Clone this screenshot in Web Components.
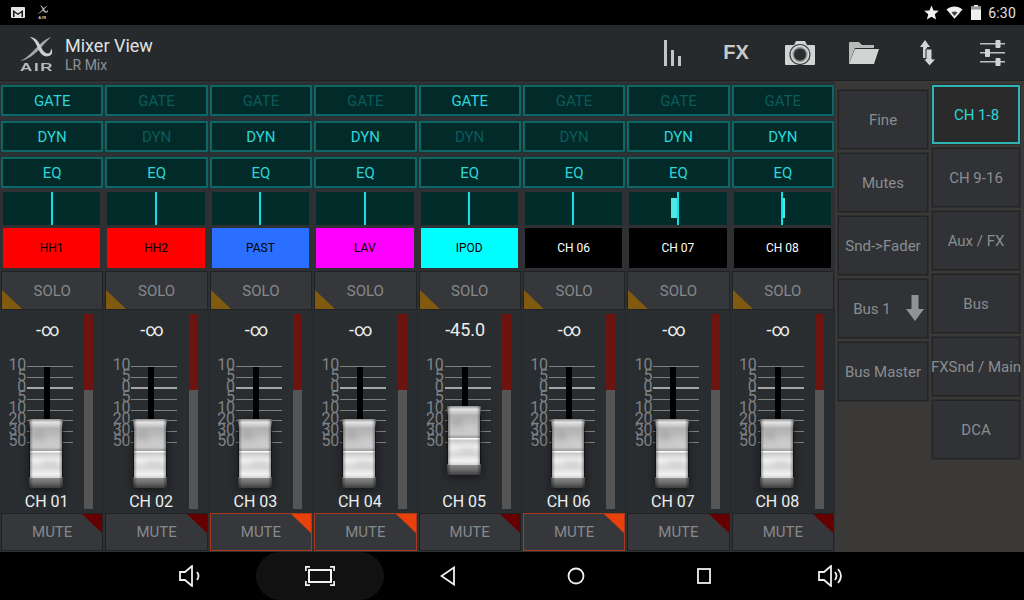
<!DOCTYPE html>
<html>
<head>
<meta charset="utf-8">
<title>Mixer View</title>
<style>
html,body{margin:0;padding:0;width:1024px;height:600px;overflow:hidden;background:#000;font-family:Roboto,"Liberation Sans",sans-serif}
</style>
</head>
<body>
<mixer-app></mixer-app>
<script>
const XLOGO = `<path d="M1 26C8 23 15 15 21 9 24 6 28 3 33 1 29 5 26 8 23 12 16 19 9 25 1 26Z" fill="#a4a6a7"/>
<path d="M11 1C16 1 20 5 22 10 24 14 26 18 30 18 32 18 33 16 33 13 35 16 35 20 30 21 25 22 22 18 20 14 18 9 16 4 11 1Z" fill="#cdcecf"/>`;

customElements.define('status-bar', class extends HTMLElement {
    constructor() {
        super();
        this.attachShadow({ mode: 'open' }).innerHTML = `<style>
:host{display:flex;align-items:center;height:25px;background:#000;color:#e0e0e0;padding:0 8px 0 11px;box-sizing:border-box}
svg{display:block}
.air{margin-left:11px;display:flex;flex-direction:column;align-items:center;width:13px}
.air span{font:bold 4px "Liberation Sans",sans-serif;letter-spacing:.6px;line-height:4px;color:#ccc}
.sp{flex:1}
.time{font-size:14px;margin-left:7px;font-weight:400;letter-spacing:.2px}
</style>
<svg width="14" height="11" viewBox="0 0 14 11"><rect width="14" height="11" rx="1" fill="#e4e4e4"/><path d="M2 10V3L7 6.5 12 3V10H10.500V5.500L7 8 3.500 5.500V10Z" fill="#111"/></svg>
<div class="air"><svg width="13" height="11" viewBox="0 0 37 30">${XLOGO}</svg><span>AIR</span></div>
<div class="sp"></div>
<svg width="15" height="15" viewBox="0 0 15 15"><path d="M7.500 .5 9.600 5.400 14.800 5.800 10.800 9.300 12.100 14.500 7.500 11.700 2.900 14.500 4.200 9.300 .2 5.800 5.400 5.400Z" fill="#f0f0f0"/></svg>
<svg width="17" height="13" viewBox="0 0 17 13" style="margin-left:7px"><path d="M.5 3.500C5 -.5 12 -.5 16.500 3.500L8.500 12.800Z" fill="#f0f0f0"/><path d="M5.500 6.500C7 5.300 10 5.300 11.500 6.500L8.500 10Z" fill="#444"/></svg>
<svg width="10" height="15" viewBox="0 0 10 15" style="margin-left:8px"><path d="M3 0H7V1.500H10V15H0V1.500H3Z" fill="#f0f0f0"/><rect y="1.500" width="10" height="3" fill="#9a9a9a"/></svg>
<span class="time">6:30</span>`;
    }
});

customElements.define('action-button', class extends HTMLElement {
    constructor() {
        super();
        this.attachShadow({ mode: 'open' }).innerHTML = `<style>
:host{display:flex;align-items:center;justify-content:center;width:64px;height:100%;color:#d2d4d4}
</style><slot></slot>`;
    }
});

customElements.define('action-bar', class extends HTMLElement {
    constructor() {
        super();
        this.attachShadow({ mode: 'open' }).innerHTML = `<style>
:host{display:flex;align-items:center;height:56px;background:#272a2d;box-sizing:border-box;border-bottom:1px solid #1f2123}
.logo{width:36px;margin-left:19px;display:flex;flex-direction:column;align-items:center;margin-top:3px}
.logo span{font:bold 10px/9px "Liberation Sans",sans-serif;letter-spacing:1px;color:#b9babb;transform:scaleX(1.7);margin-top:-1px}
.titles{margin-left:10px;display:flex;flex-direction:column;margin-top:3px}
.t{font-size:18px;line-height:21px;color:#dfe1e1}
.s{font-size:14px;line-height:18px;color:#8f9294}
.sp{flex:1}
.fx{font:bold 20px "Liberation Sans",sans-serif;color:#c8caca}
svg{display:block}
</style>
<div class="logo"><svg width="36" height="28" viewBox="0 0 37 29">${XLOGO}</svg><span>AIR</span></div>
<div class="titles"><div class="t">Mixer View</div><div class="s">LR Mix</div></div>
<div class="sp"></div>
<action-button><svg width="20" height="26" viewBox="0 0 20 26"><rect x="2" y="0" width="3" height="26" fill="#c4c6c6"/><rect x="9" y="10" width="3" height="16" fill="#c4c6c6"/><rect x="16" y="16" width="3" height="10" fill="#c4c6c6"/></svg></action-button>
<action-button><span class="fx">FX</span></action-button>
<action-button><svg width="30" height="25" viewBox="0 0 30 25"><path d="M1 5H9L11 1H20L22 5H29Q30 5 30 6V24Q30 25 29 25H1Q0 25 0 24V6Q0 5 1 5Z" fill="#d2d4d4"/><circle cx="15" cy="14.500" r="10" fill="none" stroke="#3a3c3e" stroke-width="1.200"/><circle cx="15" cy="14.500" r="7.500" fill="#8c8e90"/><circle cx="15" cy="14.500" r="6" fill="#2b2d30"/></svg></action-button>
<action-button><svg width="30" height="22" viewBox="0 0 30 22"><path d="M0 22V1Q0 0 1 0H10L13 3H25V6H6Z" fill="#b8baba"/><path d="M6 7H30L25 22H0Z" fill="#d2d4d4"/></svg></action-button>
<action-button><svg width="16" height="26" viewBox="0 0 16 26"><path d="M5 0 10 7H7V18H3V7H0Z" fill="#d2d4d4"/><path d="M6 9H12V19H16L9.500 26 3.500 19H6Z" fill="#d2d4d4" stroke="#272a2d" stroke-width="1"/></svg></action-button>
<action-button><svg width="25" height="26" viewBox="0 0 25 26"><g fill="#bfc1c1"><rect y="3" width="25" height="1.500"/><rect y="12" width="25" height="1.500"/><rect y="21" width="25" height="1.500"/></g><g fill="#d2d4d4"><rect x="15.500" y="0" width="5" height="8" rx="1"/><rect x="5" y="9" width="5" height="8" rx="1"/><rect x="15.500" y="18" width="5" height="8" rx="1"/></g></svg></action-button>`;
    }
});

customElements.define('fx-toggle', class extends HTMLElement {
    constructor() {
        super();
        this.attachShadow({ mode: 'open' }).innerHTML = `<style>
:host{display:flex;align-items:center;justify-content:center;height:31px;box-sizing:border-box;background:#022a28;border:2px solid #0f6666;box-shadow:0 0 0 1px #233;font-size:15px;color:#0c5a5c;margin:0 1px 0 1px}
:host([on]){color:#2bd6da}
</style><slot></slot>`;
    }
});

customElements.define('pan-display', class extends HTMLElement {
    constructor() {
        super();
        // negative width: block left of the centre line, positive: right of it
        const w = +this.getAttribute('width') || 0;
        const left = w < 0 ? 47.5 + w : 49.5;
        this.attachShadow({ mode: 'open' }).innerHTML = `<style>
:host{display:block;position:relative;height:33px;background:#022c2a;margin:0 4px 0 3px}
.c{position:absolute;left:47.500px;top:0;bottom:0;width:2px;background:#14e0e4}
.b{position:absolute;left:${left}px;top:6px;bottom:7px;background:#4fe6e6}
</style><div class="c"></div><div class="b" style="width:${Math.abs(w)}px"></div>`;
    }
});

customElements.define('corner-button', class extends HTMLElement {
    constructor() {
        super();
        this.attachShadow({ mode: 'open' }).innerHTML = `<style>
:host{display:flex;position:relative;align-items:center;justify-content:center;box-sizing:border-box;background:#35373b;border:1px solid #202224;color:#86898b;font-size:15px;overflow:hidden}
:host([active]){border-color:#a83a1c}
.tri{position:absolute;width:0;height:0}
:host([kind=solo]) .tri{left:0;bottom:0;border-left:20px solid #7f5a0f;border-top:19px solid transparent}
:host([kind=mute]) .tri{right:0;top:0;border-right:20px solid #660000;border-bottom:19px solid transparent}
:host([active]) .tri{border-right-color:#e8420a}
</style><div class="tri"></div><slot></slot>`;
    }
});

customElements.define('fader-cap', class extends HTMLElement {
    constructor() {
        super();
        const id = 'g' + Math.random().toString(36).slice(2);
        this.attachShadow({ mode: 'open' }).innerHTML = `<style>
:host{display:block;position:absolute;width:36px;height:71px;filter:drop-shadow(0 2px 5px rgba(0,0,0,.55))}
svg{display:block}
</style>
<svg width="36" height="71" viewBox="0 0 36 71">
<defs>
<linearGradient id="${id}a" x1="0" y1="0" x2="0" y2="1"><stop offset="0" stop-color="#8c8c8c"/><stop offset=".1" stop-color="#e4e4e4"/><stop offset=".3" stop-color="#b2b2b2"/><stop offset=".6" stop-color="#c0c0c0"/><stop offset=".88" stop-color="#cacaca"/><stop offset="1" stop-color="#9a9a9a"/></linearGradient>
<linearGradient id="${id}b" x1="0" y1="0" x2="0" y2="1"><stop offset="0" stop-color="#c4c4c4"/><stop offset=".3" stop-color="#eeeeee"/><stop offset=".6" stop-color="#dadada"/><stop offset=".85" stop-color="#f2f2f2"/><stop offset="1" stop-color="#d4d4d4"/></linearGradient>
<linearGradient id="${id}c" x1="0" y1="0" x2="0" y2="1"><stop offset="0" stop-color="#8a8a8a"/><stop offset=".5" stop-color="#6a6a6a"/><stop offset="1" stop-color="#3e3e3e"/></linearGradient>
<linearGradient id="${id}s" x1="0" y1="0" x2="1" y2="0"><stop offset="0" stop-color="#000" stop-opacity=".45"/><stop offset=".12" stop-color="#000" stop-opacity="0"/><stop offset=".88" stop-color="#000" stop-opacity="0"/><stop offset="1" stop-color="#000" stop-opacity=".45"/></linearGradient>
<filter id="${id}f"><feGaussianBlur stdDeviation="2.500"/></filter>
</defs>
<path d="M1 1H35L34 12V33H2V12Z" fill="url(#${id}a)"/>
<path d="M2 34H34V59L35 60H1L2 59Z" fill="url(#${id}b)"/>
<g filter="url(#${id}f)" opacity=".35">
<ellipse cx="11" cy="17" rx="6" ry="4" fill="#8d8d8d"/>
<ellipse cx="25" cy="24" rx="6" ry="4" fill="#dcdcdc"/>
<ellipse cx="22" cy="46" rx="9" ry="3" fill="#b0b0b0"/>
</g>
<rect x="2" y="33" width="32" height="1.500" fill="#fdfdfd"/>
<path d="M1 60H35V70H1Z" fill="url(#${id}c)"/>
<rect x="1" y="1" width="34" height="69" fill="url(#${id}s)"/>
</svg>`;
    }
});

customElements.define('fader-scale', class extends HTMLElement {
    constructor() {
        super();
        const labels = ['10', '5', '0', '5', '10', '20', '30', '50'];
        const rows = labels.map((l, i) => `<div class="r${i == 2 ? ' z' : ''}"><span>${l}</span><i></i></div>`).join('');
        this.attachShadow({ mode: 'open' }).innerHTML = `<style>
:host{display:block;position:relative;height:135px}
.r{display:flex;align-items:center;height:10.800px}
span{width:27px;box-sizing:border-box;padding-right:1px;margin-bottom:3px;text-align:right;font-size:16px;line-height:10.800px;color:#7f8285;letter-spacing:-.2px}
i{display:block;width:46px;height:1px;background:#7e8082}
.z i{height:2px;background:#a4a6a8}
.slot{position:absolute;left:44px;top:5px;width:6px;height:62px;background:#000}
</style>
<div>${rows}</div><div class="slot"></div>
<fader-cap style="top:${this.getAttribute('cap')}px;left:28px"></fader-cap>`;
    }
});

customElements.define('mixer-channel', class extends HTMLElement {
    constructor() {
        super();
        const a = n => this.getAttribute(n);
        const fg = a('fg') || '#000';
        this.attachShadow({ mode: 'open' }).innerHTML = `<style>
:host{display:flex;flex-direction:column;box-sizing:border-box;min-width:0;padding-top:4px;background:#2e3033}
.stack{display:flex;flex-direction:column;gap:5px}
pan-display{margin-top:4px}
.name{display:flex;align-items:center;justify-content:center;height:40px;margin:3px 4px 0 3px;font-size:12px}
corner-button[kind=solo]{height:39px;margin:3px 1px 0 1px}
.strip{display:flex;height:203px;background:#2a2d30;box-shadow:inset -1px 0 0 #25272a}
.left{flex:1;min-width:0;display:flex;flex-direction:column;position:relative}
.val{height:53px;padding:8px 0 0 11px;box-sizing:border-box;text-align:center;font-size:18px;color:#eceded;line-height:24px}
.meter{width:9px;margin:4px 11px 4px 0;background:linear-gradient(#6e1410 0,#6e1410 76px,#555 76px,#555 100%)}
.ch{flex:1;display:flex;align-items:flex-end;justify-content:center;font-size:16px;color:#eef0f0;line-height:20px;padding:0 0 1px 9px}
corner-button[kind=mute]{height:38px;margin:0 1px}
</style>
<div class="stack">
<fx-toggle ${a('gate') != null ? 'on' : ''}>GATE</fx-toggle>
<fx-toggle ${a('dyn') != null ? 'on' : ''}>DYN</fx-toggle>
<fx-toggle on>EQ</fx-toggle>
</div>
<pan-display width="${a('pan') || 0}"></pan-display>
<div class="name" style="background:${a('color')};color:${fg}">${a('label')}</div>
<corner-button kind="solo">SOLO</corner-button>
<div class="strip">
<div class="left">
<div class="val">${a('value') || '-∞'}</div>
<fader-scale cap="${a('cap') || 56}"></fader-scale>
<div class="ch">${a('ch')}</div>
</div>
<div class="meter"></div>
</div>
<corner-button kind="mute" ${a('muted') != null ? 'active' : ''}>MUTE</corner-button>`;
    }
});

customElements.define('side-button', class extends HTMLElement {
    constructor() {
        super();
        this.attachShadow({ mode: 'open' }).innerHTML = `<style>
:host{display:flex;align-items:center;justify-content:center;position:relative;box-sizing:border-box;height:59px;background:#303236;border:1px solid #232426;box-shadow:0 0 0 1px #2e2e2e;color:#8a8d8f;font-size:15px;white-space:nowrap}
:host([selected]){background:#2a2a2a;border:2px solid #2fb5b5;color:#2bd6da;padding-left:1px}
</style><slot></slot>`;
    }
});

customElements.define('side-panel', class extends HTMLElement {
    constructor() {
        super();
        this.attachShadow({ mode: 'open' }).innerHTML = `<style>
:host{display:flex;gap:4px;background:#3a3938;box-sizing:border-box;padding:4px 4px 0 3px}
.col{display:flex;flex-direction:column;gap:4px;width:88px}
.col.first{padding-top:5px;width:90px}
.arrow{position:absolute;right:3px;top:15px}
.bus{padding-right:22px}
</style>
<div class="col first">
<side-button>Fine</side-button>
<side-button>Mutes</side-button>
<side-button>Snd-&gt;Fader</side-button>
<side-button><span class="bus">Bus 1</span><svg class="arrow" width="18" height="26" viewBox="0 0 18 26"><path d="M5.500 0H12.500V14H18L9 26 0 14H5.500Z" fill="#8f9395"/></svg></side-button>
<side-button>Bus Master</side-button>
</div>
<div class="col">
<side-button selected>CH 1-8</side-button>
<side-button>CH 9-16</side-button>
<side-button>Aux / FX</side-button>
<side-button>Bus</side-button>
<side-button>FXSnd / Main</side-button>
<side-button>DCA</side-button>
</div>`;
    }
});

customElements.define('nav-bar', class extends HTMLElement {
    constructor() {
        super();
        const s = 'fill="none" stroke="#f0f0f0" stroke-width="1.800"';
        this.attachShadow({ mode: 'open' }).innerHTML = `<style>
:host{display:grid;grid-template-columns:repeat(6,128px);padding-left:128px;height:48px;background:#000}
div{display:flex;align-items:center;justify-content:center}
.pill{background:#111;border-radius:24px}
svg{display:block}
</style>
<div><svg width="26" height="22" viewBox="0 0 26 22"><path d="M1 7H6L13 1V21L6 15H1Z" ${s}/><path d="M18 7Q21 11 18 15" ${s}/></svg></div>
<div class="pill"><svg width="30" height="20" viewBox="0 0 30 20"><rect x="4" y="4" width="22" height="12" fill="none" stroke="#f0f0f0" stroke-width="2"/><path d="M.8 5V.8H5M25 .8H29.200V5M29.200 15V19.200H25M5 19.200H.8V15" ${s}/></svg></div>
<div><svg width="16" height="20" viewBox="0 0 16 20"><path d="M14 1.500V18.500L1.500 10Z" ${s}/></svg></div>
<div><svg width="18" height="18" viewBox="0 0 18 18"><circle cx="9" cy="9" r="7.500" ${s}/></svg></div>
<div><svg width="14" height="16" viewBox="0 0 14 16"><rect x="1" y="1" width="12" height="14" ${s}/></svg></div>
<div><svg width="28" height="22" viewBox="0 0 28 22"><path d="M1 7H6L13 1V21L6 15H1Z" ${s}/><path d="M17 7Q20 11 17 15M20 4Q26 11 20 18" ${s}/></svg></div>`;
    }
});

customElements.define('mixer-app', class extends HTMLElement {
    constructor() {
        super();
        const chans = [
            { label: 'HH1', color: '#ff0000', gate: 1, dyn: 1 },
            { label: 'HH2', color: '#ff0000' },
            { label: 'PAST', color: '#2a6fff', dyn: 1, muted: 1 },
            { label: 'LAV', color: '#ff00ff', dyn: 1, muted: 1 },
            { label: 'IPOD', color: '#00ffff', gate: 1, value: '-45.0', cap: 43 },
            { label: 'CH 06', color: '#000', fg: '#fff', muted: 1 },
            { label: 'CH 07', color: '#000', fg: '#fff', dyn: 1, pan: -6 },
            { label: 'CH 08', color: '#000', fg: '#fff', dyn: 1, pan: 2 }
        ];
        const strips = chans.map((c, i) => `<mixer-channel label="${c.label}" color="${c.color}" ch="CH 0${i + 1}"
            ${c.fg ? `fg="${c.fg}"` : ''} ${c.gate ? 'gate' : ''} ${c.dyn ? 'dyn' : ''} ${c.muted ? 'muted' : ''}
            ${c.value ? `value="${c.value}"` : ''} ${c.cap ? `cap="${c.cap}"` : ''} ${c.pan ? `pan="${c.pan}"` : ''}></mixer-channel>`).join('');
        this.attachShadow({ mode: 'open' }).innerHTML = `<style>
:host{display:flex;flex-direction:column;width:1024px;height:600px}
main{display:grid;grid-template-columns:835px 189px;height:471px}
.chs{display:grid;grid-template-columns:repeat(8,1fr);min-width:0}
</style>
<status-bar></status-bar>
<action-bar></action-bar>
<main><div class="chs">${strips}</div><side-panel></side-panel></main>
<nav-bar></nav-bar>`;
    }
});
</script>
</body>
</html>
